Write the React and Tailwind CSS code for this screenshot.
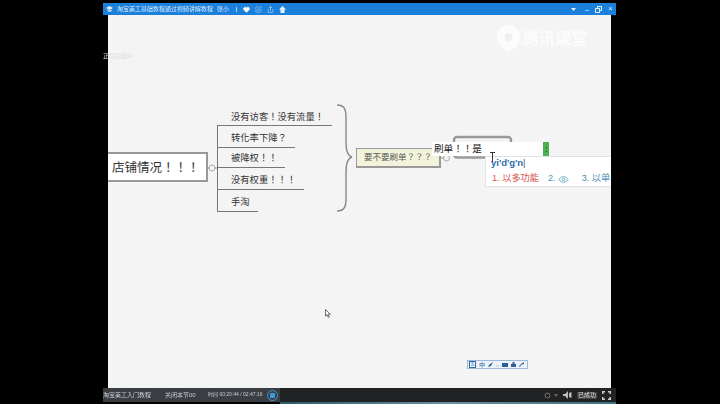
import { Heart, SquarePen, Share } from "lucide-react";

const cjk = "font-['Liberation_Sans','Noto_Sans_CJK_TC',sans-serif]";

const branches = [
  { text: "没有访客！没有流量！", top: 95 },
  { text: "转化率下降？", top: 116 },
  { text: "被降权！！", top: 136 },
  { text: "没有权重！！！", top: 158 },
  { text: "手淘", top: 180 },
];

const MapLines = () => (
  <svg className="absolute left-0 top-0" width="503" height="373" viewBox="0 0 503 373" fill="none">
    {/* trunk and branch underlines */}
    <path d="M109.5 110V196" stroke="#777" />
    <path d="M109 110.5H224" stroke="#777" />
    <path d="M109 132.5H187" stroke="#777" />
    <path d="M109 152.5H177" stroke="#777" />
    <path d="M109 174.5H196" stroke="#777" />
    <path d="M109 196.5H150" stroke="#777" />
    <path d="M100 153H109" stroke="#888" />
    <circle cx="104" cy="153" r="3" fill="#f4f4f4" stroke="#aaa" />
    {/* brace */}
    <path
      d="M229 90C236 90 238 94 238 102V128C238 137 240 141 244 142C240 143 238 148 238 157V184C238 192 236 196 229 196"
      stroke="#888"
      strokeWidth="1.4"
    />
    <path d="M333 143H338" stroke="#999" />
    <circle cx="338.5" cy="143" r="3" fill="#f4f4f4" stroke="#aaa" />
    {/* selected node behind the editor */}
    <rect x="346" y="122" width="57" height="20.5" rx="3" stroke="#999" strokeWidth="2.4" />
  </svg>
);

const EyeIcon = () => (
  <svg width="11" height="7" viewBox="0 0 13 8" fill="none" stroke="#4a9ac0" strokeWidth="0.9">
    <path d="M1 4C3 1 5 .7 6.5 .7S10 1 12 4C10 7 8 7.3 6.5 7.3S3 7 1 4Z" />
    <circle cx="6.5" cy="4" r="1.6" />
  </svg>
);

const App = () => (
  <div className={`relative flex h-[404px] w-[720px] flex-col overflow-hidden bg-black ${cjk}`}>
    <div className="h-[3px]" />

    {/* player title bar */}
    <div className="ml-[103px] flex h-[12px] w-[513px] items-center bg-[#1b7fdc] pl-[3px] pr-[3px] text-[#d8e9fa]">
      <svg width="7" height="6" viewBox="0 0 7 6" fill="#e6f1fc">
        <path d="M3.5 0L7 2 3.5 4 0 2ZM1.5 3.6L3.5 4.8 5.5 3.6V5L3.5 6 1.5 5Z" />
      </svg>
      <span className="ml-[4px] w-[96px] shrink-0 whitespace-nowrap text-[6px] leading-[12px] blur-[0.3px]">淘宝美工基础教程通过视频讲解教程</span>
      <span className="ml-[4px] text-[6px] leading-[12px] blur-[0.3px]">张小</span>
      <span className="ml-[7px] h-[5px] w-px bg-[#a9cff2]" />
      <Heart className="ml-[6px]" size={7} fill="#fff" stroke="#fff" />
      <SquarePen className="ml-[5px]" size={7} strokeWidth={1.5} />
      <Share className="ml-[5px]" size={7} strokeWidth={2} />
      <svg className="ml-[5px]" width="7" height="7" viewBox="0 0 7 7" fill="#e6f1fc">
        <path d="M3.5 0L7 3.5H5.5V7H1.5V3.5H0Z" />
      </svg>
      <div className="ml-auto flex items-center">
        <svg width="5" height="3" viewBox="0 0 5 3" fill="#e6f1fc">
          <path d="M0 0H5L2.5 3Z" />
        </svg>
        <span className="ml-[9px] mt-[3px] h-px w-[4px] bg-[#8fc0ee]" />
        <svg className="ml-[6px]" width="7" height="7" viewBox="0 0 7 7" fill="none" stroke="#e6f1fc">
          <path d="M.5 2.5H4.5V6.5H.5ZM2.5 2V.5H6.5V4.5H5" />
        </svg>
        <span className="ml-[6px] w-[5px] text-[8px] leading-none text-[#e6f1fc]">×</span>
      </div>
    </div>

    {/* recorded mind map */}
    <div className="relative ml-[108px] h-[373px] w-[503px] bg-[#f4f4f4] text-[#333]">
      <MapLines />

      {/* watermark */}
      <div className="absolute left-[389px] top-[10px] flex items-center gap-[3px]">
        <svg width="23" height="27" viewBox="0 0 23 27" fill="#fcfcfc">
          <path d="M11.5 0C18 0 23 5 23 12 23 19 17 24 11.5 27 6 24 0 19 0 12 0 5 5 0 11.5 0Z" />
          <circle cx="11.5" cy="12" r="4" fill="#efefef" />
        </svg>
        <span className="text-[16px] font-bold leading-none text-[#fcfcfc] blur-[0.4px]">腾讯课堂</span>
      </div>

      <span className="absolute -left-[5px] top-[38px] text-[6px] leading-none text-[#ddd] blur-[0.4px]">正在回放中</span>

      {/* root node */}
      <div className="absolute left-0 top-[137px] flex h-[30px] w-[100px] items-center border-2 border-l-0 border-[#999] bg-white pl-[4px] pt-[2px] text-[12.5px] text-[#333]">
        店铺情况！！！
      </div>

      {branches.map((b) => (
        <span
          key={b.text}
          className="absolute left-[123px] whitespace-nowrap text-[9.3px] leading-[14px] text-[#333]"
          style={{ top: b.top }}
        >
          {b.text}
        </span>
      ))}

      {/* question node */}
      <div className="absolute left-[248px] top-[133px] flex h-[20px] w-[85px] items-center justify-center border border-r-2 border-b-2 border-[#999] bg-[#f3f3dc] text-[8.5px] text-[#555]">
        要不要刷单？？？
      </div>

      {/* in-place editor */}
      <div className="absolute left-[324px] top-[127px] flex h-[14px] w-[117px] items-center bg-white pl-[2px] text-[9.6px] text-[#222]">
        刷单！！是
        <span className="absolute right-0 top-0 flex h-[14px] w-[6px] flex-col items-center justify-center gap-[3px] bg-[#4caf50]">
          <span className="h-px w-px bg-[#1d5a22]" />
          <span className="h-px w-px bg-[#1d5a22]" />
        </span>
      </div>

      {/* IME candidate popup */}
      <div className="absolute left-[377px] top-[141px] h-[31px] w-[126px] overflow-hidden border border-r-0 border-[#dfe3e8] bg-white">
        <div className="h-[14px] pl-[5px] text-[9.5px] font-bold leading-[12px] text-[#2b6cb0]">
          yi'd'g'n<span className="font-normal text-[#555]">|</span>
        </div>
        <div className="flex h-[16px] items-center whitespace-nowrap pl-[6px] text-[9.2px] leading-none text-[#4a9ac0]">
          <span className="text-[#d9534f]">1. 以多功能</span>
          <span className="ml-[9px]">2.</span>
          <span className="ml-[2px]"><EyeIcon /></span>
          <span className="ml-[13px] text-[#4a8fb5]">3. 以单</span>
        </div>
      </div>

      {/* text cursor */}
      <span className="absolute left-[384px] top-[137px] h-[10px] w-px bg-[#333]" />
      <span className="absolute left-[382px] top-[137px] h-px w-[5px] bg-[#333]" />

      {/* mouse pointer */}
      <svg className="absolute left-[217px] top-[294px]" width="6" height="9" viewBox="0 0 6 9" fill="#fff" stroke="#333" strokeWidth="0.7">
        <path d="M.5 .5V7L2 5.6 3.2 8.3 4.3 7.8 3.2 5.2H5.3Z" />
      </svg>

      {/* language bar */}
      <div className="absolute left-[359px] top-[345px] flex h-[9px] w-[61px] items-center gap-[3px] border border-[#9db9d9] bg-[#eef3fa] px-[1px] text-[6px] leading-none text-[#2c5f95]">
        <span className="flex h-[7px] w-[7px] items-center justify-center border border-[#2c6aa8] text-[4px]">五</span>
        <span>中</span>
        <svg width="5" height="5" viewBox="0 0 5 5" fill="#2c5f95"><path d="M5 0L3 4 0 5 1 3Z" /></svg>
        <span className="text-[5px]">,,</span>
        <span className="h-[4px] w-[6px] bg-[#2c5f95]" />
        <svg width="5" height="5" viewBox="0 0 5 5" fill="#2c5f95"><path d="M1.5 0H3.5V2H5V5H0V2H1.5Z" /></svg>
        <svg width="5" height="5" viewBox="0 0 5 5" fill="#2c5f95"><path d="M5 0V2L2 3 1 5 0 4 1.5 2.5Z" /></svg>
      </div>
    </div>

    {/* player controls */}
    <div className="ml-[103px] flex h-[14px] w-[513px] items-center bg-[#212224]">
      <div className="flex h-full w-[177px] items-center overflow-hidden whitespace-nowrap bg-[#3a3d41] text-[6px] text-[#c9cdd2]">
        <span className="w-[46px] blur-[0.3px]">淘宝美工入门教程</span>
        <span className="ml-[16px] w-[28px] blur-[0.3px]">关闭本节00</span>
        <span className="ml-[15px] w-[56px] text-[5px] blur-[0.3px]">时间 00:20:44 / 02:47:16</span>
        <span className="ml-[3px] flex h-[11px] w-[11px] shrink-0 items-center justify-center rounded-full border border-[#3d9be0]">
          <span className="h-[5px] w-[5px] rounded-[1px] bg-[#3d9be0]" />
        </span>
      </div>
      <div className="ml-[264px] flex items-center text-[#bbb]">
        <svg width="7" height="7" viewBox="0 0 7 7" fill="none" stroke="#777">
          <circle cx="3.5" cy="3.5" r="2.5" />
        </svg>
        <svg className="ml-[3px]" width="4" height="3" viewBox="0 0 4 3" fill="#666">
          <path d="M0 0H4L2 3Z" />
        </svg>
        <svg className="ml-[5px]" width="9" height="8" viewBox="0 0 9 8" fill="#bbb">
          <path d="M0 3H2L5 0V8L2 5H0ZM6 2L8.5 1V7L6 6Z" />
        </svg>
        <span className="ml-[5px] bg-[#444] px-[1px] text-[6px] leading-[7px] text-[#ddd] blur-[0.3px]">已成功</span>
        <svg className="ml-[5px]" width="9" height="9" viewBox="0 0 9 9" fill="#ccc">
          <path d="M0 0H3V1.5H1.5V3H0ZM6 0H9V3H7.5V1.5H6ZM0 6H1.5V7.5H3V9H0ZM7.5 6H9V9H6V7.5H7.5Z" />
        </svg>
      </div>
    </div>

    {/* desktop showing under the player */}
    <div className="ml-[280px] h-[2px] w-[336px] bg-gradient-to-r from-[#2c5a66] via-[#6d8f9c] to-[#3d6f80]" />
  </div>
);

export default App;
